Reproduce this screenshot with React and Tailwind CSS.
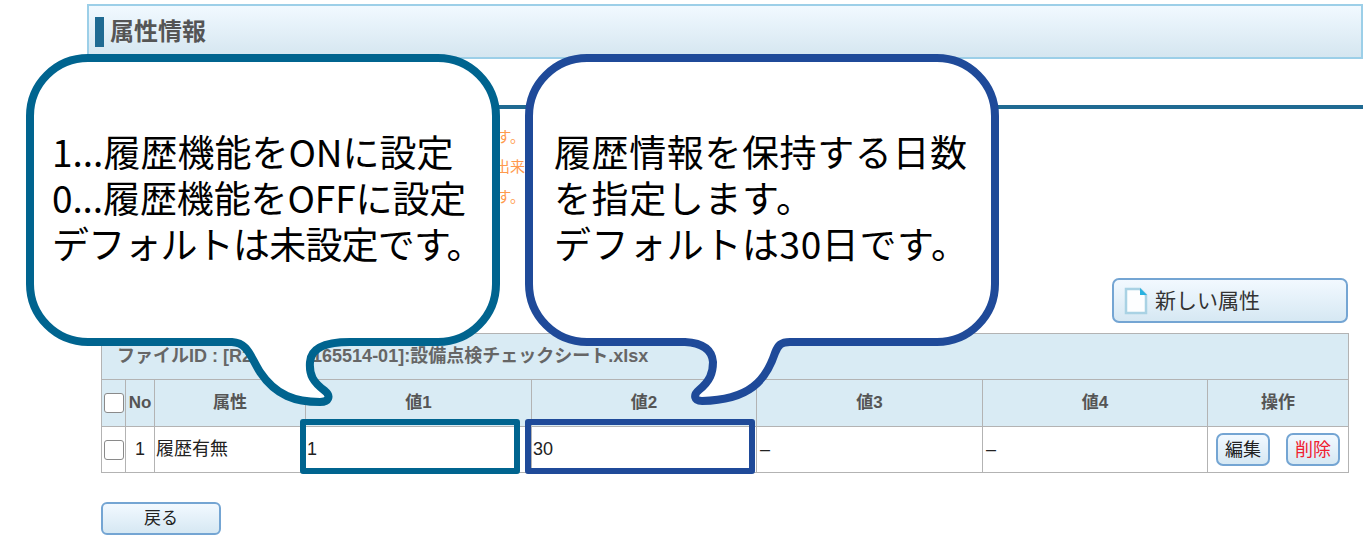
const fontStack = "font-['Liberation_Sans','Noto_Sans_CJK_JP',sans-serif]";
const thClass = "border border-[#b3b3b3] text-center align-middle font-bold text-[17px] text-[#555]";
const tdClass = "border border-[#b3b3b3] align-middle text-[18px] text-[#222] px-[1px]";
const smallBtn =
  "h-[33px] w-[54px] rounded-[7px] border-2 border-[#74a5d3] bg-gradient-to-b from-[#f2f9ff] to-[#d6e8f3] text-[18px] leading-none";

const Checkbox = () => (
  <span className="block h-[20px] w-[20px] rounded-[3px] border border-[#8a8a8a] bg-white mx-auto"></span>
);

const NewFileIcon = () => (
  <svg width="24" height="28" viewBox="0 0 24 28" className="shrink-0">
    <path d="M2 2 H16 L22 8 V26 H2 Z" fill="#fdfeff" stroke="#a9d2e4" strokeWidth="2.5" />
    <path d="M16 1 L23 8 H16 Z" fill="#29b2e0" />
  </svg>
);

const Callouts = () => (
  <>
    <svg width="1368" height="537" viewBox="0 0 1368 537" className="absolute left-0 top-0">
      <path
        d="M88 58 H438 A58 58 0 0 1 496 116 V284 A58 58 0 0 1 438 342 H350 C328 342 311 347 310 362 C309 375 313 382 325 391 C331 396 329 402 320 402 C296 402 276 396 260 372 C250 356 248 343 232 342 H88 A58 58 0 0 1 30 284 V116 A58 58 0 0 1 88 58 Z"
        fill="#fff"
        stroke="#00648f"
        strokeWidth="8"
        strokeLinejoin="round"
      />
      <path
        d="M587 58 H937 A58 58 0 0 1 995 116 V284 A58 58 0 0 1 937 342 H790 C781 342 778 345 775 353 C766 380 750 400 702 401 C694 401 693 395 699 390 C710 381 713 373 713 362 C712 350 703 343 685 342 H587 A58 58 0 0 1 529 284 V116 A58 58 0 0 1 587 58 Z"
        fill="#fff"
        stroke="#1f4a99"
        strokeWidth="8"
        strokeLinejoin="round"
      />
    </svg>
    <div className="absolute left-[52px] top-[128px] text-[37px] leading-[46px] text-black whitespace-nowrap font-['Noto_Sans_CJK_JP',sans-serif]">
      <div>1...履歴機能をONに設定</div>
      <div className="tracking-[-0.1px]">0...履歴機能をOFFに設定</div>
      <div className="tracking-[-0.8px]">デフォルトは未設定です。</div>
    </div>
    <div className="absolute left-[554px] top-[128px] text-[37px] leading-[46px] text-black whitespace-nowrap font-['Noto_Sans_CJK_JP',sans-serif] tracking-[0.6px]">
      <div>履歴情報を保持する日数</div>
      <div>を指定します。</div>
      <div>デフォルトは30日です。</div>
    </div>
    <div className="absolute left-[300px] top-[419px] h-[55px] w-[220px] rounded-[3px] border-[6px] border-[#00648f]"></div>
    <div className="absolute left-[525px] top-[419px] h-[55px] w-[230px] rounded-[3px] border-[6px] border-[#1f4a99]"></div>
  </>
);

const App = () => {
  return (
    <div className={`relative h-[537px] w-[1368px] overflow-hidden bg-white ${fontStack}`}>
      <div className="ml-[87px] mr-[5px] pt-[4px]">
        <div className="flex h-[55px] items-center gap-[6px] border-2 border-[#9ccfe8] bg-gradient-to-b from-[#f1f9ff] to-[#d5e6f0] pl-[6px]">
          <span className="h-[30px] w-[9px] bg-[#1f6a92]"></span>
          <h1 className="text-[24px] font-bold text-[#555]">属性情報</h1>
        </div>
        <div className="mt-[46px] h-[4px] bg-[#1f6a92]"></div>
      </div>

      <div className="ml-[101px] mt-[13px] w-[424px] text-right text-[15px] leading-[30px] text-[#ff9a4d] whitespace-nowrap overflow-hidden">
        <div>履歴機能の属性を設定します。</div>
        <div>値を変更することが出来</div>
        <div>設定は編集画面で行います。</div>
      </div>

      <div className="mr-[20px] mt-[66px] flex justify-end">
        <button className="flex h-[45px] w-[236px] items-center gap-[7px] rounded-[7px] border-2 border-[#74a5d3] bg-gradient-to-b from-[#f2f9ff] to-[#d6e8f3] pl-[10px] text-[21px] text-[#333]">
          <NewFileIcon />
          新しい属性
        </button>
      </div>

      <table className="ml-[101px] mt-[10px] w-[1247px] table-fixed border-collapse">
        <colgroup>
          <col className="w-[24px]" />
          <col className="w-[29px]" />
          <col className="w-[151px]" />
          <col className="w-[226px]" />
          <col className="w-[225px]" />
          <col className="w-[226px]" />
          <col className="w-[225px]" />
          <col className="w-[141px]" />
        </colgroup>
        <thead>
          <tr className="h-[46px] bg-[#d9ebf4]">
            <th colSpan="8" className="border border-[#b3b3b3] pl-[15px] text-left text-[18px] font-bold text-[#666]">
              ファイルID : [R2000000165514-01]:設備点検チェックシート.xlsx
            </th>
          </tr>
          <tr className="h-[47px] bg-[#d9ebf4]">
            <th className={thClass}>
              <Checkbox />
            </th>
            <th className={thClass}>No</th>
            <th className={thClass}>属性</th>
            <th className={thClass}>値1</th>
            <th className={thClass}>値2</th>
            <th className={thClass}>値3</th>
            <th className={thClass}>値4</th>
            <th className={thClass}>操作</th>
          </tr>
        </thead>
        <tbody>
          <tr className="h-[46px]">
            <td className={tdClass}>
              <Checkbox />
            </td>
            <td className={`${tdClass} text-center`}>1</td>
            <td className={tdClass}>履歴有無</td>
            <td className={tdClass}>1</td>
            <td className={tdClass}>30</td>
            <td className={`${tdClass} pl-[3px]`}>–</td>
            <td className={`${tdClass} pl-[3px]`}>–</td>
            <td className={tdClass}>
              <div className="flex justify-center gap-[16px]">
                <button className={`${smallBtn} text-[#222]`}>編集</button>
                <button className={`${smallBtn} text-[#f02030]`}>削除</button>
              </div>
            </td>
          </tr>
        </tbody>
      </table>

      <button className="ml-[101px] mt-[29px] block h-[33px] w-[120px] rounded-[6px] border-2 border-[#74a5d3] bg-gradient-to-b from-[#f2f9ff] to-[#d6e8f3] text-[17px] text-[#222]">
        戻る
      </button>

      <Callouts />
    </div>
  );
};

export default App;
